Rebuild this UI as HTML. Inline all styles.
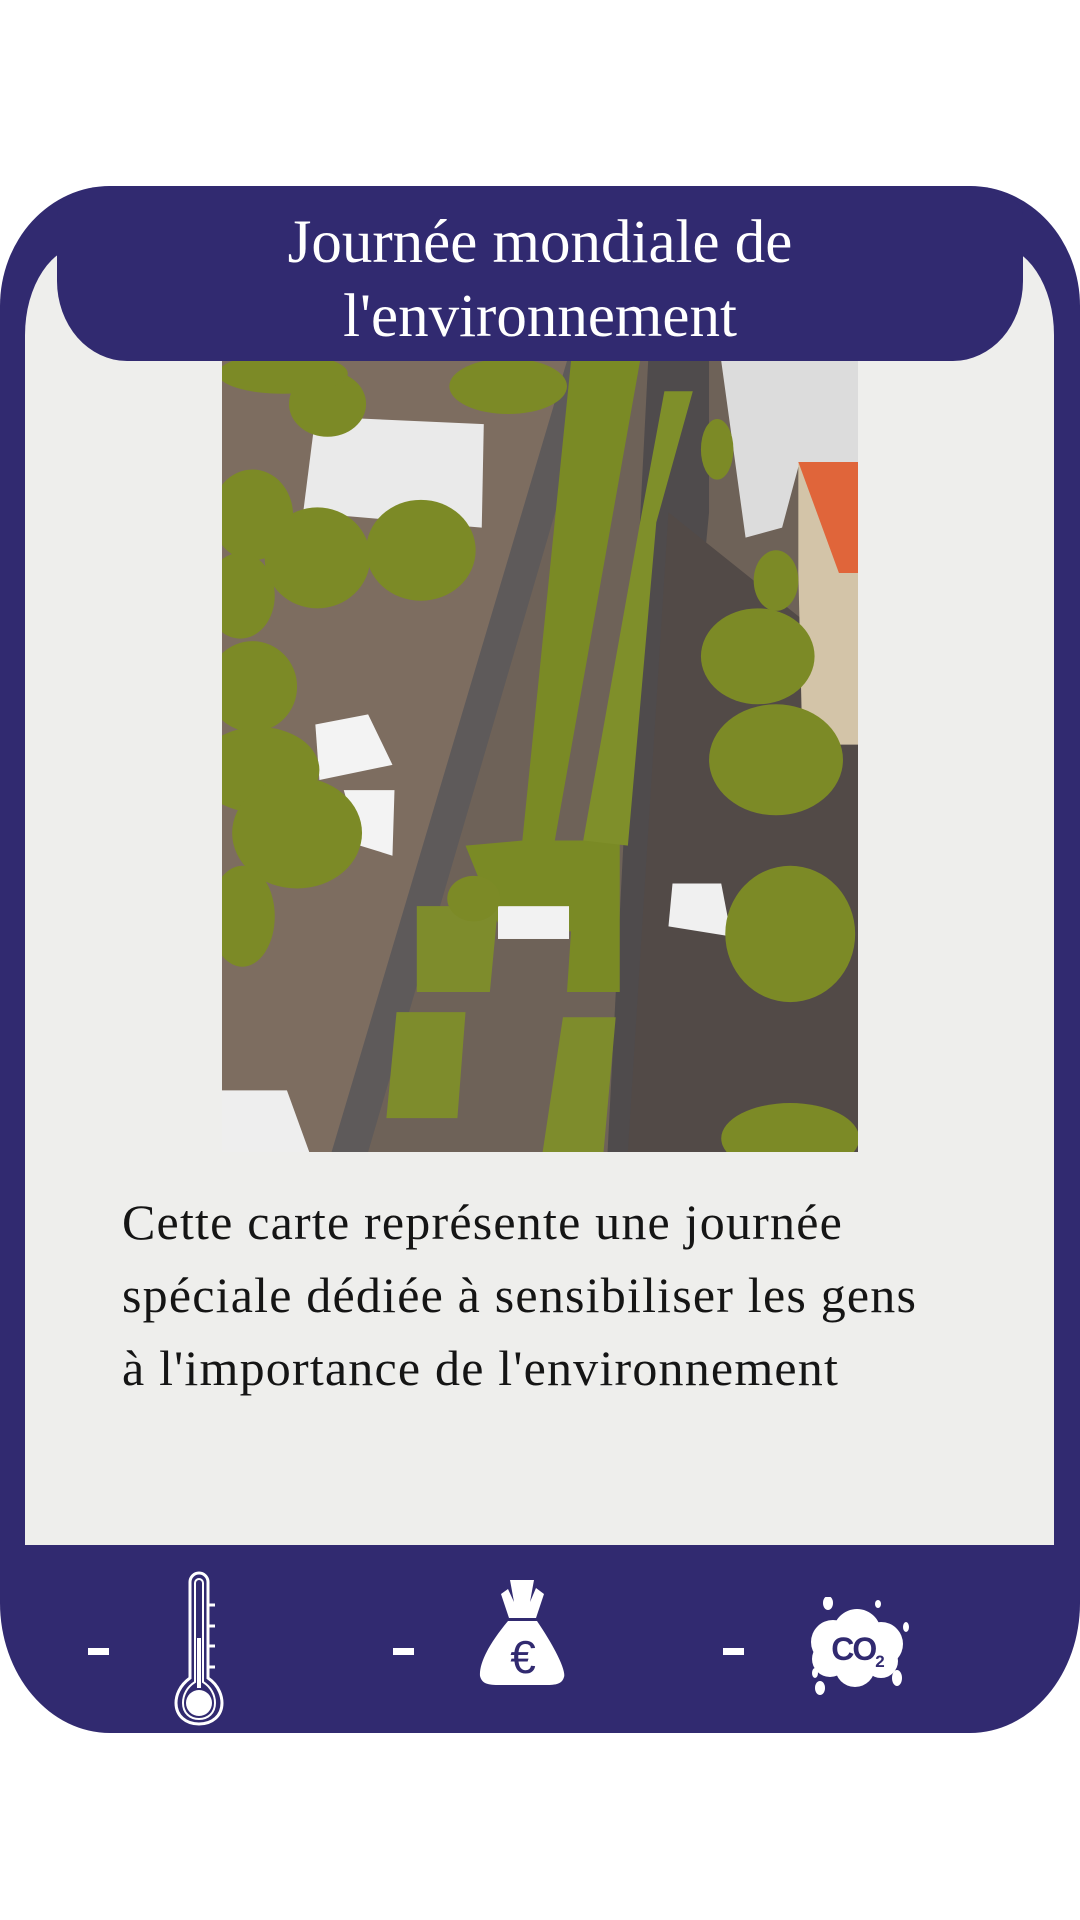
<!DOCTYPE html>
<html><head><meta charset="utf-8"><style>
html,body{margin:0;padding:0;background:#fff;}
body{width:1080px;height:1920px;position:relative;overflow:hidden;font-family:"Liberation Serif",serif;}
.card{position:absolute;left:0;top:186px;width:1080px;height:1547px;background:#312a70;border-radius:110px 110px 110px 110px / 120px 120px 130px 130px;}
.panel{position:absolute;left:25px;top:245px;width:1029px;height:1300px;background:#eeeeec;border-radius:60px 60px 0 0 / 90px 90px 0 0;}
.banner{position:absolute;left:57px;top:186px;width:966px;height:175px;background:#312a70;border-radius:60px 60px 70px 70px / 30px 30px 80px 80px;color:#fff;text-align:center;font-size:61px;line-height:74px;padding-top:20px;box-sizing:border-box;white-space:nowrap;}
.img{position:absolute;left:222px;top:361px;width:636px;height:791px;}
.text{position:absolute;left:122px;top:1186px;width:940px;font-size:50px;letter-spacing:1.2px;line-height:73px;color:#151515;white-space:nowrap;}
.dash{position:absolute;width:21px;height:7px;background:#fff;}
</style></head><body>
<div class="card"></div>
<div class="panel"></div>
<svg class="img" viewBox="0 0 1567 1567" preserveAspectRatio="none">
<rect width="1567" height="1567" fill="#6e6258"/>
<polygon points="0,0 900,0 300,1567 0,1567" fill="#7d6d60"/>
<polygon points="850,0 930,0 360,1567 270,1567" fill="#5e5a5a"/>
<polygon points="1050,0 1200,0 1200,300 1050,1567 950,1567" fill="#4f4b4c"/>
<polygon points="1100,300 1567,600 1567,1567 1000,1567" fill="#524a47"/>
<polygon points="1230,0 1567,0 1567,200 1420,210 1380,330 1290,350" fill="#dcdcdc"/>
<polygon points="1420,200 1567,200 1567,760 1430,760 1420,420" fill="#d3c4a8"/>
<polygon points="1420,200 1567,200 1567,420 1520,420" fill="#e0653a"/>
<polygon points="860,0 1030,0 820,950 980,950 980,1250 850,1250 860,1130 690,1130 660,1080 600,960 740,950" fill="#7a8a25"/>
<polygon points="1090,60 1160,60 1070,320 1000,960 890,950 1030,320" fill="#7f8f2a"/>
<polygon points="480,1080 680,1080 660,1250 480,1250" fill="#7e8c2c"/>
<polygon points="430,1290 600,1290 580,1500 405,1500" fill="#7e8c2c"/>
<polygon points="840,1300 970,1300 940,1567 790,1567" fill="#7e8c2c"/>
<rect x="680" y="1080" width="175" height="65" fill="#f2f2f2"/>
<polygon points="230,110 645,125 640,330 200,300" fill="#eaeaea"/>
<polygon points="1110,1035 1230,1035 1255,1140 1100,1120" fill="#f0f0f0"/>
<polygon points="230,720 360,700 420,800 240,830" fill="#f3f3f3"/>
<polygon points="300,850 425,850 420,980 340,960" fill="#f3f3f3"/>
<polygon points="0,1445 160,1445 215,1567 0,1567" fill="#eeeeee"/>
<g fill="#7c8a26">
<ellipse cx="260" cy="85" rx="95" ry="65"/><ellipse cx="705" cy="50" rx="145" ry="55"/><ellipse cx="150" cy="25" rx="160" ry="40"/>
<ellipse cx="75" cy="305" rx="100" ry="90"/><ellipse cx="235" cy="390" rx="130" ry="100"/><ellipse cx="490" cy="375" rx="135" ry="100"/>
<ellipse cx="45" cy="465" rx="85" ry="85"/><ellipse cx="75" cy="645" rx="110" ry="90"/><ellipse cx="90" cy="810" rx="150" ry="85"/>
<ellipse cx="185" cy="935" rx="160" ry="110"/><ellipse cx="50" cy="1100" rx="80" ry="100"/><ellipse cx="620" cy="1065" rx="65" ry="45"/>
<ellipse cx="1320" cy="585" rx="140" ry="95"/><ellipse cx="1365" cy="790" rx="165" ry="110"/><ellipse cx="1400" cy="1135" rx="160" ry="135"/>
<ellipse cx="1400" cy="1540" rx="170" ry="70"/><ellipse cx="1365" cy="435" rx="55" ry="60"/><ellipse cx="1220" cy="175" rx="40" ry="60"/>
</g>
</svg>
<div class="banner">Journée mondiale de<br>l'environnement</div>
<div class="text">Cette carte représente une journée<br>spéciale dédiée à sensibiliser les gens<br>à l'importance de l'environnement</div>
<div class="dash" style="left:88px;top:1648px"></div>
<div class="dash" style="left:393px;top:1648px"></div>
<div class="dash" style="left:723px;top:1648px"></div>
<svg style="position:absolute;left:170px;top:1570px" width="60" height="156" viewBox="0 0 60 156">
<path d="M20 12 a9 9 0 0 1 18 0 V108 C50 116 52 128 52 133 C52 146 42 154 29 154 C16 154 6 146 6 133 C6 126 9 116 20 108 Z" fill="none" stroke="#fff" stroke-width="3"/>
<path d="M25 13 a4 4 0 0 1 8 0 V112 C41 117 45 125 45 133 C45 143 38 149 29 149 C20 149 13 143 13 133 C13 125 17 117 25 112 Z" fill="none" stroke="#fff" stroke-width="2"/>
<rect x="27" y="68" width="4" height="50" fill="#fff"/>
<ellipse cx="29" cy="133" rx="13" ry="13" fill="#fff"/>
<g stroke="#fff" stroke-width="3"><line x1="38" y1="35" x2="45" y2="35"/><line x1="38" y1="56" x2="45" y2="56"/><line x1="38" y1="76" x2="45" y2="76"/><line x1="38" y1="97" x2="45" y2="97"/></g>
</svg>
<svg style="position:absolute;left:478px;top:1580px" width="90" height="105" viewBox="0 0 90 105">
<path d="M32 0 L56 0 L52 22 L58 8 L66 14 L58 38 L31 38 L23 14 L30 9 L36 22 Z" fill="#fff"/>
<path d="M30 41 L59 41 C80 72 88 92 86 97 C84 104 78 105 68 105 L22 105 C10 105 4 104 2 96 C1 84 10 65 30 41 Z" fill="#fff"/>
<text x="45" y="93" text-anchor="middle" font-family="Liberation Sans,sans-serif" font-size="46" fill="#312a70">€</text>
</svg>
<svg style="position:absolute;left:805px;top:1597px" width="105" height="100" viewBox="0 0 105 100">
<g fill="#fff">
<ellipse cx="23" cy="6" rx="5" ry="7"/><ellipse cx="73" cy="7" rx="3" ry="4"/><ellipse cx="101" cy="30" rx="3" ry="5"/>
<ellipse cx="10" cy="76" rx="3" ry="5"/><ellipse cx="15" cy="91" rx="5" ry="7"/><ellipse cx="92" cy="81" rx="5" ry="8"/>
<circle cx="52" cy="36" r="24"/><circle cx="28" cy="45" r="22"/><circle cx="76" cy="47" r="22"/><circle cx="25" cy="62" r="18"/><circle cx="50" cy="70" r="20"/><circle cx="76" cy="64" r="17"/>
</g>
<text x="52" y="63" text-anchor="middle" font-family="Liberation Sans,sans-serif" font-weight="bold" font-size="32" fill="#312a70" letter-spacing="-2">CO<tspan font-size="17" dy="7">2</tspan></text>
</svg>
</body></html>
